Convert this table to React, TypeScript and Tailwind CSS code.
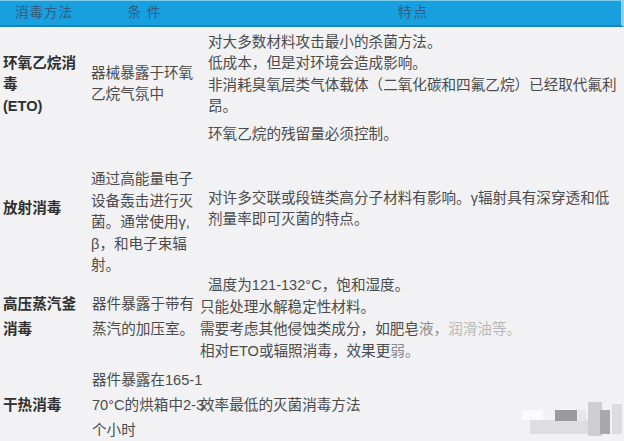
const font = { fontFamily: '"Liberation Sans", "Noto Sans CJK SC", sans-serif' }

function Lines({ lines, className }: { lines: React.ReactNode[]; className?: string }) {
  return (
    <div className={className}>
      {lines.map((l, i) => (
        <div key={i} className="whitespace-nowrap">
          {l}
        </div>
      ))}
    </div>
  )
}

export default function App() {
  return (
    <div
      className="relative w-[624px] h-[441px] overflow-hidden bg-[#f2f2f4] text-[14.6px] text-[#4b4b4b]"
      style={font}
    >
      {/* header */}
      <div className="grid grid-cols-[88px_112px_1fr] h-[27px] items-center bg-[#179fe0] border-t border-t-[#7fcdec] border-b-2 border-b-[#1886bb] border-r-[3px] border-r-[#8fd3ee] text-[13.5px] text-[#335d7c]">
        <div className="text-center tracking-[1px]">消毒方法</div>
        <div className="text-center tracking-[6px] pl-[6px]">条件</div>
        <div className="text-center tracking-[2px] pl-[6px]">特点</div>
      </div>

      {/* row 1 */}
      <div className="grid grid-cols-[88px_112px_1fr] h-[119px] items-center leading-[21.5px]">
        <Lines
          className="pl-[3px] pb-[3px] font-bold text-[#2f2f2f]"
          lines={['环氧乙烷消', '毒', '(ETO)']}
        />
        <Lines className="pl-[3px] pb-[5px]" lines={['器械暴露于环氧', '乙烷气氛中']} />
        <div className="pl-[8px] pt-[4px]">
          <Lines
            lines={[
              '对大多数材料攻击最小的杀菌方法。',
              '低成本，但是对环境会造成影响。',
              '非消耗臭氧层类气体载体（二氧化碳和四氟乙烷）已经取代氟利',
              '昂。',
            ]}
          />
          <div className="mt-[6px] whitespace-nowrap">环氧乙烷的残留量必须控制。</div>
        </div>
      </div>

      {/* row 2 */}
      <div className="grid grid-cols-[88px_112px_1fr] h-[128px] items-center leading-[21.5px]">
        <Lines className="pl-[3px] pb-[6px] font-bold text-[#2f2f2f]" lines={['放射消毒']} />
        <Lines
          className="pl-[3px] pt-[23px]"
          lines={['通过高能量电子', '设备轰击进行灭', '菌。通常使用γ,', 'β，和电子束辐', '射。']}
        />
        <Lines
          className="pl-[8px] pb-[4px]"
          lines={['对许多交联或段链类高分子材料有影响。γ辐射具有深穿透和低', '剂量率即可灭菌的特点。']}
        />
      </div>

      {/* row 3 */}
      <div className="grid grid-cols-[88px_112px_1fr] h-[88px] items-center">
        <Lines
          className="pl-[3px] pb-[5px] leading-[25px] font-bold text-[#2f2f2f]"
          lines={['高压蒸汽釜', '消毒']}
        />
        <Lines className="pl-[4px] pb-[5px] leading-[25px]" lines={['器件暴露于带有', '蒸汽的加压室。']} />
        <Lines
          className="pl-0 pb-[2px] leading-[22px]"
          lines={[
            <span className="pl-[8px]">温度为121-132°C，饱和湿度。</span>,
            '只能处理水解稳定性材料。',
            <>
              需要考虑其他侵蚀类成分，如肥皂
              <span className="text-[#8a8a8a]">液，</span>
              <span className="text-[#b8b8b8]">润滑油等。</span>
            </>,
            <>
              相对ETO或辐照消毒，效果更<span className="text-[#8a8a8a]">弱。</span>
            </>,
          ]}
        />
      </div>

      {/* row 4 */}
      <div className="grid grid-cols-[88px_112px_1fr] h-[86px] items-center leading-[25px]">
        <Lines className="pl-[3px] font-bold text-[#2f2f2f]" lines={['干热消毒']} />
        <Lines className="pl-[4px]" lines={['器件暴露在165-1', '70°C的烘箱中2-3', '个小时']} />
        <Lines className="pl-0" lines={['效率最低的灭菌消毒方法']} />
      </div>

      {/* blurred watermark mosaic */}
      <div className="absolute left-[520px] top-[400px] w-[104px] h-[41px]">
        <div className="absolute left-[2px] top-[10px] w-[21px] h-[10px] bg-[#fbfbfb]" />
        <div className="absolute left-[10px] top-[20px] w-[80px] h-[14px] bg-[#dedee0]" />
        <div className="absolute left-[35px] top-[10px] w-[22px] h-[11px] bg-[#9a9a9c]" />
        <div className="absolute left-[58px] top-[10px] w-[8px] h-[11px] bg-[#e6e6e8]" />
        <div className="absolute left-[68px] top-[2px] w-[14px] h-[34px] bg-[#cfcfd1]" />
        <div className="absolute left-[80px] top-[10px] w-[10px] h-[24px] bg-[#a9a9ab]" />
        <div className="absolute left-[92px] top-[4px] w-[10px] h-[30px] bg-[#dcdcde]" />
      </div>
    </div>
  )
}
